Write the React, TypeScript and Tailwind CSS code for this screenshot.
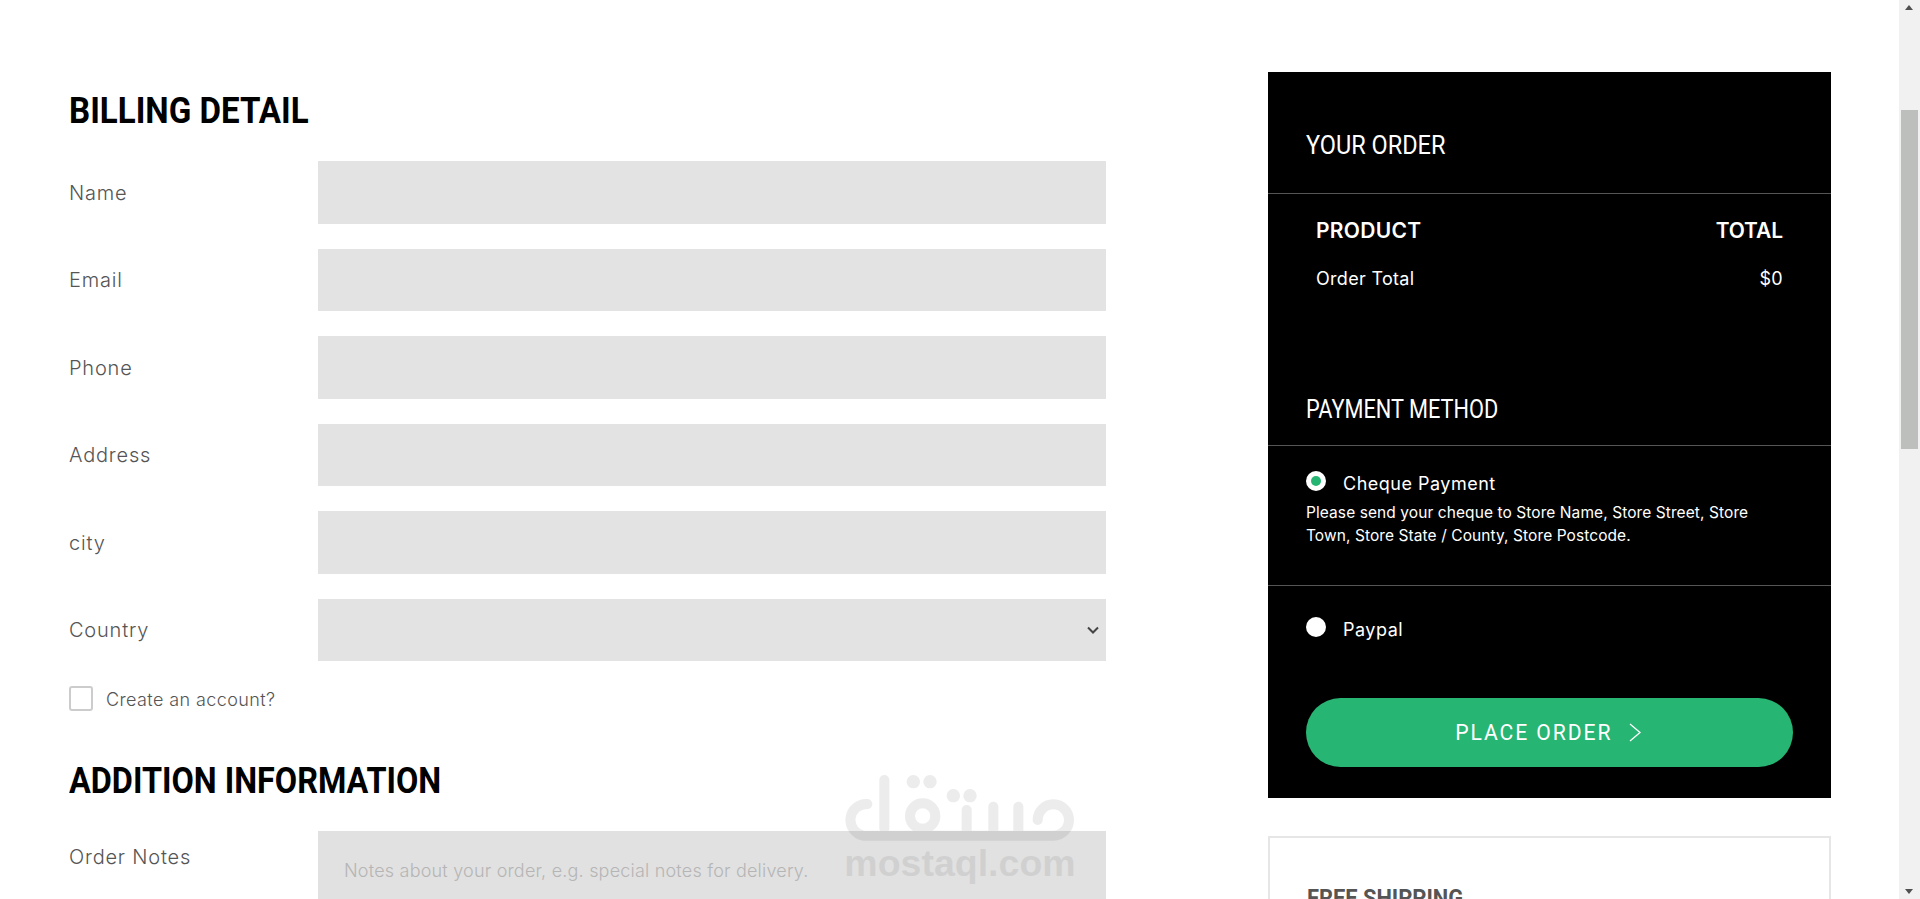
import React from "react";

const body = "[font-family:Inter,'Open_Sans',sans-serif]";
const head = "[font-family:Roboto,sans-serif]";

function Row({ label, select }: { label: string; select?: boolean }) {
  return (
    <div className="flex items-center h-[62.5px]">
      <label className="w-[249px] pt-[1px] text-[20px] font-light tracking-[0.8px] text-[#555]">{label}</label>
      <div className="relative flex-1 h-full bg-[#e3e3e3]">
        {select && (
          <svg className="absolute right-[7px] top-[27px]" width="12" height="8" viewBox="0 0 12 8">
            <path d="M1 1.5 L6 6.5 L11 1.5" fill="none" stroke="#444" strokeWidth="2" />
          </svg>
        )}
      </div>
    </div>
  );
}

function Radio({ on }: { on?: boolean }) {
  return (
    <span className="flex items-center justify-center w-[20px] h-[20px] rounded-full bg-white shrink-0">
      {on && <span className="w-[10px] h-[10px] rounded-full bg-[#27b573]" />}
    </span>
  );
}

function Method({ on, label }: { on?: boolean; label: string }) {
  return (
    <div className="flex items-start gap-[17px] h-[25px] text-[18px] leading-[24px] tracking-[0.5px]">
      <Radio on={on} />
      <span className="mt-[1px]">{label}</span>
    </div>
  );
}

export default function App() {
  return (
    <div className={`relative h-[899px] overflow-hidden bg-white ${body}`}>
      <div className="flex items-start pl-[69px]">
        <main className="w-[1037px] pt-[88px]">
          <h2 className={`text-[36px] leading-[46px] font-bold text-black origin-left scale-x-[0.92] ${head}`}>BILLING DETAIL</h2>
          <div className="mt-[27px] flex flex-col gap-[25px]">
            <Row label="Name" />
            <Row label="Email" />
            <Row label="Phone" />
            <Row label="Address" />
            <Row label="city" />
            <Row label="Country" select />
          </div>
          <div className="mt-[25px] flex items-center h-[25px]">
            <span className="w-[24px] h-[25px] rounded-[3px] border-2 border-[#ccc] bg-white" />
            <span className="ml-[13px] pt-[2px] text-[18px] font-light tracking-[0.4px] text-[#555]">Create an account?</span>
          </div>
          <h2 className={`mt-[47px] text-[36px] leading-[46px] font-bold text-black origin-left scale-x-[0.9] ${head}`}>ADDITION INFORMATION</h2>
          <div className="mt-[27px] flex items-start">
            <label className="w-[249px] mt-[11px] text-[20px] font-light tracking-[0.8px] text-[#555]">Order Notes</label>
            <div className="flex-1 h-[120px] bg-[#e1e1e1] px-[26px] pt-[26px] text-[18px] tracking-[0.2px] font-light text-[#b5b5b5]">
              Notes about your order, e.g. special notes for delivery.
            </div>
          </div>
        </main>
        <aside className="ml-[162px] mt-[72px] w-[563px]">
          <div className="bg-black text-white h-[726px]">
            <div className="h-[122px] border-b border-[#555] px-[38px] pt-[56px]">
              <h3 className={`text-[25px] leading-[36px] origin-left scale-x-[0.94] ${head}`}>YOUR ORDER</h3>
            </div>
            <div className="px-[48px] pt-[23px]">
              <div className="flex justify-between text-[21px] leading-[28px] tracking-[0.3px] font-semibold">
                <span>PRODUCT</span>
                <span className="tracking-[-0.1px]">TOTAL</span>
              </div>
              <div className="mt-[21px] flex justify-between text-[18px] leading-[26px] tracking-[0.3px]">
                <span>Order Total</span>
                <span>$0</span>
              </div>
            </div>
            <div className="mt-[99px] h-[55px] border-b border-[#555] px-[38px] pt-[1px]">
              <h3 className={`text-[25px] leading-[36px] origin-left scale-x-[0.87] ${head}`}>PAYMENT METHOD</h3>
            </div>
            <div className="h-[140px] border-b border-[#555] px-[38px] pt-[25px]">
              <Method on label="Cheque Payment" />
              <p className="mt-[5px] pr-[30px] text-[15.5px] leading-[23px] tracking-[0.08px]">
                Please send your cheque to Store Name, Store Street, Store Town, Store State / County, Store Postcode.
              </p>
            </div>
            <div className="px-[38px] pt-[31px]">
              <Method label="Paypal" />
            </div>
            <button className={`mx-[38px] mt-[56px] pr-[6px] flex items-center justify-center gap-[14px] w-[487px] h-[69px] rounded-full bg-[#27b573] text-white text-[22px] ${head}`}>
              <span className="tracking-[2px] scale-x-[0.96]">PLACE ORDER</span>
              <svg width="12" height="19" viewBox="0 0 12 19"><path d="M1 1 L11 9.5 L1 18" fill="none" stroke="#fff" strokeWidth="1.3" /></svg>
            </button>
          </div>
          <div className="mt-[38px] h-[200px] border-2 border-[#e6e6e6] px-[37px] pt-[44px]">
            <h3 className={`text-[24px] leading-[32px] font-bold text-[#555] origin-left scale-x-[0.91] ${head}`}>FREE SHIPPING</h3>
          </div>
        </aside>
      </div>

      {/* watermark */}
      <div className="absolute left-[845px] top-[775px] w-[230px] flex flex-col items-center pointer-events-none opacity-[0.07]">
        <svg width="230" height="70" viewBox="195 585 690 210" fill="none" stroke="#000" strokeWidth="30" strokeLinecap="round">
          <path d="M313 600 V745" />
          <path d="M262 672 A48 48 0 0 0 250 767 H820 A47 47 0 1 0 773 720" />
          <circle cx="428" cy="708" r="38" />
          <path d="M560 690 V755 M640 680 V755 M715 680 V755" />
          <g fill="#000" stroke="none">
            <circle cx="400" cy="605" r="20" />
            <circle cx="450" cy="605" r="20" />
            <circle cx="520" cy="647" r="20" />
            <circle cx="570" cy="647" r="20" />
          </g>
        </svg>
        <span className="mt-[-1px] text-[37.5px] leading-[38px] font-bold text-black whitespace-nowrap [font-family:'Liberation_Sans',sans-serif]">mostaql.com</span>
      </div>

      {/* scrollbar */}
      <div className="absolute right-0 top-0 w-[21px] h-full bg-[#f1f1f1]">
        <div className="absolute left-[6px] top-[5px] w-0 h-0 border-x-[4px] border-x-transparent border-b-[5px] border-b-[#505050]" />
        <div className="absolute left-[2px] right-[2px] top-[110px] h-[339px] bg-[#bdbfbd]" />
        <div className="absolute left-[6px] bottom-[5px] w-0 h-0 border-x-[4px] border-x-transparent border-t-[5px] border-t-[#505050]" />
      </div>
    </div>
  );
}
